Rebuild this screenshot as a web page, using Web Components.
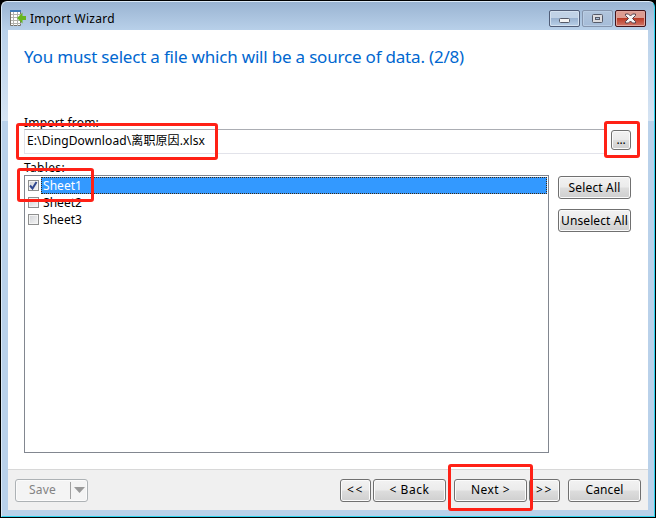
<!DOCTYPE html>
<html lang="en"><head><meta charset="utf-8"><title>Import Wizard</title>
<style>html,body{margin:0;width:656px;height:518px;overflow:hidden;background:#000;font-family:"Noto Sans","Noto Sans CJK SC",sans-serif;font-size:12px;color:#000}</style></head><body>
<import-window></import-window>
<script>
class Base extends HTMLElement{
  constructor(){super();this.attachShadow({mode:'open'}).innerHTML=this.render();}
  render(){return '';}
}
class UiText extends HTMLElement{
  constructor(){super();this.attachShadow({mode:'open'}).innerHTML='<style>:host{display:block;white-space:pre;line-height:18px}span{display:inline-block}</style><span><slot></slot></span>';}
  connectedCallback(){
    const s=this.shadowRoot.querySelector('span'),w=+this.getAttribute('w');
    if(!w)return;
    const n=[...this.textContent].length,d=(w-s.getBoundingClientRect().width)/n;
    s.style.letterSpacing=d.toFixed(3)+'px';
  }
}
class PushButton extends Base{
  render(){return `<style>
:host{display:flex;box-sizing:border-box;height:23px;border:1px solid #707070;border-radius:3px;align-items:center;justify-content:center;box-shadow:inset 0 0 0 1px #fbfbfb;background:linear-gradient(#f2f2f2,#ebebeb 48%,#dddddd 52%,#cfcfcf)}
:host([disabled]){border-color:#adb2b5;background:#f4f4f4;color:#838383}
</style><slot></slot>`}
}
class WindowControls extends Base{
  render(){return `<style>
:host{display:flex;gap:2px}
div{box-sizing:border-box;width:31px;height:17px;border:1px solid #505d77;border-radius:2px;box-shadow:inset 0 0 0 1px #d3e1f0;background:linear-gradient(#c0d2e6 0 46%,#98b1cf 47%,#b9d0e8);display:grid;place-items:center}
.max{border-color:#8595ad;box-shadow:inset 0 0 0 1px #b9cde4;background:linear-gradient(#b1c5dc,#a5bcd8)}
.close{border-color:#43141a;box-shadow:inset 0 0 0 1px #e0a69e;background:linear-gradient(#dc9c91 0 46%,#b93722 47%,#d2786a)}
svg{display:block}
</style><div><svg width="11" height="5" style="margin-top:4px"><rect x=".5" y=".5" width="10" height="4" rx="1" fill="#f4f4f4" stroke="#555a68"/></svg></div>
<div class="max"><svg width="11" height="9"><rect x=".5" y=".5" width="10" height="8" rx="1" fill="#dcdcdf" stroke="#555a68"/><rect x="3.5" y="3.5" width="4" height="2" fill="#a9bed7" stroke="#555a68"/></svg></div>
<div class="close"><svg width="13" height="11" viewBox="0 0 13 11"><path d="M1.500 1h3l2 2 2-2h3v1.500l-3 3 3 3V10h-3l-2-2-2 2h-3V8.500l3-3-3-3z" fill="#f6f6f6" stroke="#56404b"/></svg></div>`}
}
class SheetIcon extends Base{
  render(){return `<style>:host{display:block;width:16px;height:16px}svg{display:block}</style><svg width="16" height="16"><path d="M.5 0.500h10v15H.5z" fill="#fff" stroke="#77736c"/><path d="M0 0h11v2H0z" fill="#3f7ab8"/><path d="M1 4.500h10M1 7.500h10M1 10.500h10M1 13.500h10M3.500 2v14M7.500 2v14" stroke="#b2b2ae"/><path d="M7 8L12.500 2.500V6H16v4h-3.500v3.500z" fill="#68b51d"/></svg>`}
}
class CheckRow extends Base{
  render(){return `<style>
:host{display:flex;height:17px;align-items:center}
.box{box-sizing:border-box;width:11px;height:11px;border:1px solid #8e8f8f;margin:0 2px 0 2px;background:linear-gradient(135deg,#d0d2d6,#f6f6f6);box-shadow:inset 0 0 0 1px #f4f4f4}
svg{display:none}:host([checked]) svg{display:block}
.label{flex:1;box-sizing:border-box;height:17px;padding-left:2px;display:flex;align-items:center}
:host([checked]) .label{background:#3399ff;color:#fff;outline:1px dotted #40280f;outline-offset:-1px}
</style><div class="box"><svg width="9" height="9"><path d="M1 4.500l2.500 3L7.500 1" fill="none" stroke="#30478e" stroke-width="2"/></svg></div><div class="label"><slot></slot></div>`}
}
class RedMark extends Base{
  render(){return `<style>:host{display:block;position:absolute;box-sizing:border-box;border:3px solid #ff2116;border-radius:3px}</style>`}
}
class ImportWindow extends Base{
  render(){return `<style>
:host{display:block;position:relative;box-sizing:border-box;width:656px;height:518px;padding:1px;background:#000}
.frame{box-sizing:border-box;width:654px;height:516px;border:1px solid #dceaf7;border-right-color:#2ed3ee;border-bottom-color:#2ed3ee;border-radius:6px 6px 0 0;background:linear-gradient(#9ab4d2,#b9d1ea 29px,#d6e4f3 119px,#b9d1ea 119px);padding:0 6px 6px;display:flex;flex-direction:column}
header{height:28px;display:flex;align-items:center;flex:none}
sheet-icon{margin:4px 4px 0 2px}
header ui-text{margin-top:5px;flex:1}
window-controls{margin:5px 2px 0 0}
main{flex:1;background:#fff;display:flex;flex-direction:column;padding:0 16px;min-height:0}
h1{font-size:17px;font-weight:400;color:#0067d0;margin:15px 0 0;height:69px}h1 ui-text{line-height:24px}
.from{display:flex;align-items:center}
.import{display:flex;height:25px;flex:1;box-sizing:border-box;border:1px solid #e2e3ea;border-top-color:#abadb3;border-right:0;padding:2px 2px 0}
.from push-button{width:20px;height:20px;margin:-4px 1px 0 6px}.from push-button ui-text{margin-top:1px}
.tables{display:flex;gap:9px}
.list{box-sizing:border-box;width:525px;height:278px;border:1px solid #828790;padding:1px}
aside{display:flex;flex-direction:column;gap:10px;padding-top:1px}aside push-button{width:73px}
footer{height:41px;box-sizing:border-box;border-top:1px solid #d8d8d8;background:#f0f0f0;display:flex;align-items:center;padding:0 7px;flex:none}
.save{width:73px;justify-content:flex-start}.save ui-text{margin-left:13px;flex:1}.save i{width:16px;height:17px;border-left:1px solid #a0a0a0;display:grid;place-items:center}
</style>
<div class="frame"><header><sheet-icon></sheet-icon><ui-text w="85">Import Wizard</ui-text><window-controls></window-controls></header>
<main><h1><ui-text w="440">You must select a file which will be a source of data. (2/8)</ui-text></h1>
<ui-text w="75" style="margin-bottom:-3px">Import from:</ui-text>
<div class="from"><div class="import"><ui-text w="178">E:\\DingDownload\\离职原因.xlsx</ui-text></div><push-button><ui-text w="9">...</ui-text></push-button></div>
<ui-text w="41" style="margin:5px 0 -2px">Tables:</ui-text>
<div class="tables"><div class="list"><check-row checked><ui-text w="39">Sheet1</ui-text></check-row><check-row><ui-text w="39">Sheet2</ui-text></check-row><check-row><ui-text w="39">Sheet3</ui-text></check-row></div>
<aside><push-button><ui-text w="52">Select All</ui-text></push-button><push-button><ui-text w="67">Unselect All</ui-text></push-button></aside></div>
</main>
<footer><push-button class="save" disabled><ui-text w="27">Save</ui-text><i><svg width="11" height="6"><path d="M0 0h11L5.500 6z" fill="#999"/></svg></i></push-button><span style="flex:1"></span>
<push-button style="width:31px"><ui-text w="17">&lt;&lt;</ui-text></push-button><push-button style="width:73px;margin-left:2px"><ui-text w="40">&lt; Back</ui-text></push-button><push-button style="width:73px;margin-left:8px"><ui-text w="39">Next &gt;</ui-text></push-button><push-button style="width:31px;margin-left:2px"><ui-text w="17">&gt;&gt;</ui-text></push-button><push-button style="width:73px;margin-left:8px"><ui-text w="38">Cancel</ui-text></push-button></footer></div>
<red-mark style="left:16px;top:123px;width:202px;height:37px"></red-mark><red-mark style="left:604px;top:121px;width:36px;height:37px"></red-mark><red-mark style="left:17px;top:168px;width:77px;height:34px"></red-mark><red-mark style="left:448px;top:464px;width:85px;height:47px"></red-mark>`}
}
customElements.define('ui-text',UiText);customElements.define('push-button',PushButton);customElements.define('window-controls',WindowControls);customElements.define('sheet-icon',SheetIcon);customElements.define('check-row',CheckRow);customElements.define('red-mark',RedMark);customElements.define('import-window',ImportWindow);
</script></body></html>
